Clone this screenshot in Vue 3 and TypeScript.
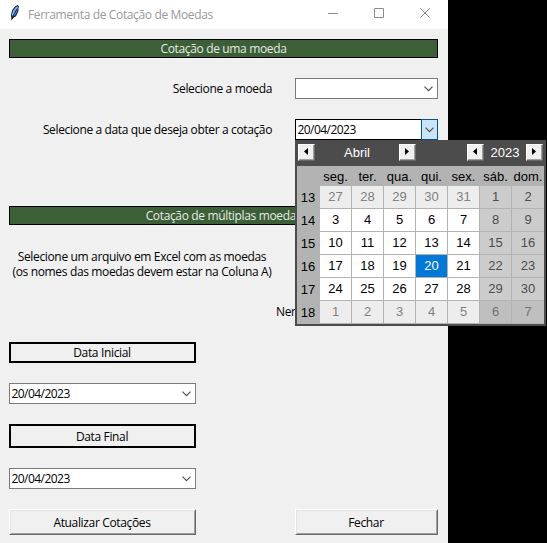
<script setup lang="ts">
const weekdays: string[] = ['seg.', 'ter.', 'qua.', 'qui.', 'sex.', 'sáb.', 'dom.']

interface Week {
  num: number
  days: number[]
}

const weeks: Week[] = [
  { num: 13, days: [27, 28, 29, 30, 31, 1, 2] },
  { num: 14, days: [3, 4, 5, 6, 7, 8, 9] },
  { num: 15, days: [10, 11, 12, 13, 14, 15, 16] },
  { num: 16, days: [17, 18, 19, 20, 21, 22, 23] },
  { num: 17, days: [24, 25, 26, 27, 28, 29, 30] },
  { num: 18, days: [1, 2, 3, 4, 5, 6, 7] },
]

function dayClass(row: number, col: number, day: number) {
  return {
    weekend: col > 4,
    other: (row === 0 && day > 20) || row === 5,
    selected: row === 3 && day === 20,
  }
}
</script>

<template>
  <div class="screen">
    <main class="window">
      <header class="titlebar">
        <svg class="feather" width="12" height="18" viewBox="0 0 12 18">
          <path d="M2.5 16.5 2 11 3.2 6 6 2.5 8.6 1l1.2 1-.5 5.5L7 12.3 4 14z" fill="#16202c" />
          <path d="M2.9 11.5 3.9 6.7 6.4 3.5 8.6 2l.2 2-.7 4-2 3.6-2.3 1z" fill="#3f83d0" />
          <path d="M3.5 11 5 7 8.3 2.8" fill="none" stroke="#8fbdf0" stroke-width="1.2" />
          <path d="M3 15.5 5 10.5 8 5" fill="none" stroke="#16202c" stroke-width=".8" />
        </svg>
        <span class="title">Ferramenta de Cotação de Moedas</span>
        <div class="controls">
          <svg width="10" height="10" viewBox="0 0 10 10"><path d="M0 5.5h10" /></svg>
          <svg width="10" height="10" viewBox="0 0 10 10"><path d="M.5.5h9v9h-9z" /></svg>
          <svg width="10" height="10" viewBox="0 0 10 10"><path d="M.2.2l9.6 9.6M9.8.2.2 9.8" /></svg>
        </div>
      </header>

      <section class="body">
        <h2 class="banner"><span>Cotação de uma moeda</span></h2>

        <div class="row">
          <label>Selecione a moeda</label>
          <div class="combo">
            <span class="value"></span>
            <span class="arrow"><svg width="9" height="6" viewBox="0 0 9 6"><path d="M.5.7l4 4 4-4" /></svg></span>
          </div>
        </div>

        <div class="row date">
          <label>Selecione a data que deseja obter a cotação</label>
          <div class="combo active">
            <span class="value">20/04/2023</span>
            <span class="arrow"><svg width="9" height="6" viewBox="0 0 9 6"><path d="M.5.7l4 4 4-4" /></svg></span>
          </div>
        </div>

        <h2 class="banner second"><span>Cotação de múltiplas moedas</span></h2>

        <p class="help">
          <span>Selecione um arquivo em Excel com as moedas</span><br />
          <span>(os nomes das moedas devem estar na Coluna A)</span>
        </p>
        <p class="file">Nenhum</p>

        <div class="range">
          <div class="caption"><span>Data Inicial</span></div>
          <div class="combo">
            <span class="value">20/04/2023</span>
            <span class="arrow"><svg width="9" height="6" viewBox="0 0 9 6"><path d="M.5.7l4 4 4-4" /></svg></span>
          </div>
          <div class="caption tall"><span>Data Final</span></div>
          <div class="combo">
            <span class="value">20/04/2023</span>
            <span class="arrow"><svg width="9" height="6" viewBox="0 0 9 6"><path d="M.5.7l4 4 4-4" /></svg></span>
          </div>
        </div>

        <footer class="actions">
          <button class="update"><span>Atualizar Cotações</span></button>
          <button class="close"><span>Fechar</span></button>
        </footer>
      </section>
    </main>

    <div class="calendar">
      <div class="nav">
        <button class="step"><svg width="4" height="7" viewBox="0 0 4 7"><path d="M4 0v7L0 3.5z" /></svg></button>
        <span class="month">Abril</span>
        <button class="step"><svg width="4" height="7" viewBox="0 0 4 7"><path d="M0 0v7L4 3.5z" /></svg></button>
        <button class="step year-prev"><svg width="4" height="7" viewBox="0 0 4 7"><path d="M4 0v7L0 3.5z" /></svg></button>
        <span class="year">2023</span>
        <button class="step"><svg width="4" height="7" viewBox="0 0 4 7"><path d="M0 0v7L4 3.5z" /></svg></button>
      </div>
      <div class="days">
        <span></span>
        <span v-for="d in weekdays" :key="d" class="wd">{{ d }}</span>
        <template v-for="(w, r) in weeks" :key="w.num">
          <span class="wk">{{ w.num }}</span>
          <span v-for="(d, c) in w.days" :key="c" class="day" :class="dayClass(r, c, d)">{{ d }}</span>
        </template>
      </div>
    </div>
  </div>
</template>

<style>
body {
  margin: 0;
  background: #000;
}
</style>

<style scoped>
.screen {
  position: relative;
  width: 547px;
  height: 543px;
  overflow: hidden;
  background: #000;
  font-family: 'Open Sans', 'Noto Sans', sans-serif;
  font-size: 12px;
  line-height: 15px;
  color: #000;
}
.screen * {
  box-sizing: border-box;
}
.screen span,
.screen label {
  white-space: nowrap;
}
.window {
  width: 448px;
  height: 543px;
  background: #f0f0f0;
}
.titlebar {
  display: flex;
  align-items: center;
  height: 29px;
  padding: 0 18px 3px 9px;
  background: #fff;
  color: #999;
}
.feather {
  margin-right: 7px;
}
.title {
  letter-spacing: -0.36px;
  padding-top: 2px;
}
.controls {
  display: flex;
  gap: 36px;
  margin-left: auto;
}
.controls svg {
  display: block;
}
.controls path {
  fill: none;
  stroke: #8c8c8c;
  stroke-width: 1;
}
.body {
  padding: 10px 10px 0 9px;
  letter-spacing: -0.35px;
}
.banner {
  display: flex;
  justify-content: center;
  margin: 0;
  height: 19px;
  border: 1px solid #000;
  background: #3c5f37;
  color: #e6eae4;
  font-size: 12px;
  line-height: 18px;
  font-weight: 400;
}
.row {
  display: grid;
  grid-template-columns: 263px 143px;
  column-gap: 23px;
  align-items: center;
  margin-top: 20px;
}
.row label {
  justify-self: end;
}
.date label {
  letter-spacing: -0.37px;
}
.combo {
  display: flex;
  height: 21px;
  border: 1px solid #7a7a7a;
  background: #fff;
  line-height: 20px;
}
.value {
  flex: 1;
  padding-left: 1.5px;
  letter-spacing: -0.55px;
}
.arrow {
  display: flex;
  align-items: center;
  justify-content: center;
  width: 17px;
}
.arrow svg {
  display: block;
}
.arrow path {
  fill: none;
  stroke: #505050;
  stroke-width: 1.2;
}
.combo.active {
  border-color: #000;
}
.combo.active .arrow {
  margin: -1px;
  width: 17px;
  border: 1px solid #00549a;
  background: #cce4f7;
}
.second {
  margin-top: 66px;
}
.help {
  width: 266px;
  margin: 24px 0 0;
  text-align: center;
}
.file {
  margin: 25px 0 0;
  padding-left: 267px;
  height: 16px;
}
.range {
  display: grid;
  gap: 20px;
  width: 187px;
  margin-top: 22px;
}
.caption {
  display: flex;
  align-items: center;
  justify-content: center;
  height: 21px;
  border: 2px solid #000;
  background: #f0f0f0;
}
.caption span {
  padding-right: 1px;
}
.caption.tall {
  height: 24px;
}
.actions {
  display: flex;
  justify-content: space-between;
  margin-top: 20px;
}
.actions button {
  height: 26px;
  padding: 0 1px 0 0;
  border: 1px solid;
  border-color: #fff #696969 #696969 #fff;
  background: #f0f0f0;
  box-shadow: inset 1px 1px #e3e3e3, inset -1px -1px #a0a0a0;
  font: inherit;
  letter-spacing: inherit;
  color: #000;
}
.update {
  width: 187px;
}
.close {
  width: 143px;
}

.calendar {
  position: absolute;
  left: 295px;
  top: 140px;
  width: 251px;
  height: 186px;
  padding: 0 2px;
  background: #4c4c4c;
  font-family: 'Liberation Sans', Arial, sans-serif;
  font-size: 13px;
}
.nav {
  display: flex;
  align-items: center;
  height: 26px;
  padding: 0 1px 2px;
  color: #fff;
}
.step {
  display: flex;
  align-items: center;
  justify-content: center;
  flex: none;
  width: 17px;
  height: 17px;
  padding: 0 2px 1px 0;
  border: 1px solid;
  border-color: #fff #696969 #696969 #fff;
  background: #f0f0f0;
  box-shadow: inset -1px -1px #a0a0a0;
}
.month {
  width: 84px;
  text-align: center;
}
.year-prev {
  margin-left: 51px;
}
.year {
  flex: 1;
  text-align: center;
}
.days {
  display: grid;
  grid-template-columns: 22px repeat(6, 31px) 32px;
  grid-template-rows: 19px repeat(6, 22px);
  gap: 1px;
  height: 158px;
  background: #b3b3b3;
}
.wd,
.wk,
.day {
  display: flex;
  align-items: center;
  justify-content: center;
}
.wd {
  padding-top: 1px;
}
.wk {
  padding-top: 1px;
}
.day {
  background: #fff;
  padding-bottom: 1px;
}
.day.weekend {
  background: #ccc;
  color: #4d4d4d;
}
.day.other {
  background: #ededed;
  color: #808080;
}
.day.weekend.other {
  background: #bfbfbf;
  color: #737373;
}
.day.selected {
  background: #0078d7;
  color: #fff;
}
</style>
